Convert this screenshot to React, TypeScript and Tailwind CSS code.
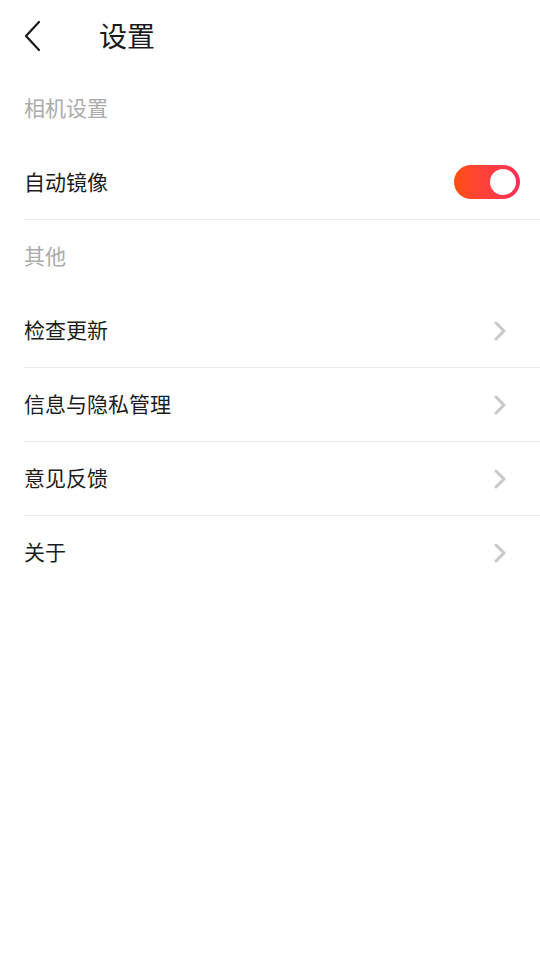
import { useState } from 'react'

const FONT = { fontFamily: '"Noto Sans CJK SC", "Noto Sans", sans-serif' }

function BackIcon() {
  return (
    <svg width="18" height="32" viewBox="0 0 18 32" fill="none">
      <path d="M15 2 L2 16 L15 30" stroke="#1a1a1a" strokeWidth="2.2" strokeLinecap="round" strokeLinejoin="round" />
    </svg>
  )
}

function Chevron() {
  return (
    <svg width="14" height="20" viewBox="0 0 14 20" fill="none">
      <path d="M3 2 L11 10 L3 18" stroke="#c8c8c8" strokeWidth="3" strokeLinecap="round" strokeLinejoin="round" />
    </svg>
  )
}

function Toggle({ on, onChange }: { on: boolean; onChange: () => void }) {
  return (
    <button
      onClick={onChange}
      className={`w-[66px] h-[34px] rounded-full flex items-center px-[4px] mb-[2px] ${
        on ? 'bg-gradient-to-r from-[#ff4f0a] to-[#ff2c55] justify-end' : 'bg-[#e5e5e5] justify-start'
      }`}
    >
      <span className="w-[26px] h-[26px] rounded-full bg-white block" />
    </button>
  )
}

function SectionLabel({ text }: { text: string }) {
  return (
    <div className="h-[74px] flex items-center pl-6 text-[21px] text-[#ababab]">
      <span className="pb-[2px]">{text}</span>
    </div>
  )
}

function Row({ label, last, right }: { label: string; last?: boolean; right?: React.ReactNode }) {
  return (
    <div className={`h-[74px] ml-6 flex items-center justify-between ${last ? '' : 'border-b border-[#ebebeb]'}`}>
      <span className="text-[21px] text-[#1c1c1c] pb-[2px]">{label}</span>
      <div className="pr-5 flex items-center">{right ?? <span className="pr-[13px] flex"><Chevron /></span>}</div>
    </div>
  )
}

export default function App() {
  const [mirror, setMirror] = useState(true)

  return (
    <div className="w-[540px] h-[960px] bg-white" style={FONT}>
      {/* Header */}
      <div className="h-[72px] flex items-center pl-6">
        <BackIcon />
        <span className="ml-[57px] text-[28px] text-[#1a1a1a] pb-[2px]">设置</span>
      </div>

      <SectionLabel text="相机设置" />
      <Row label="自动镜像" right={<Toggle on={mirror} onChange={() => setMirror(!mirror)} />} />

      <SectionLabel text="其他" />
      <Row label="检查更新" />
      <Row label="信息与隐私管理" />
      <Row label="意见反馈" />
      <Row label="关于" last />
    </div>
  )
}
